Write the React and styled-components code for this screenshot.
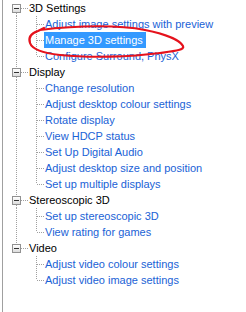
import React from "react";
import styled, { createGlobalStyle } from "styled-components";

const Global = createGlobalStyle`
  html, body { margin: 0; padding: 0; background: #ffffff; }
  body { font-family: "Liberation Sans", Arial, sans-serif; font-size: 11px; }
`;

const Page = styled.div`
  position: relative;
  width: 246px;
  height: 312px;
  padding-left: 2px;
  box-sizing: border-box;
  overflow: hidden;
`;

const Panel = styled.div`
  height: 100%;
  border-left: 1px solid #a0a0a0;
  padding-left: 3px;
  display: flex;
  flex-direction: column;
`;

const Row = styled.div`
  display: flex;
  align-items: stretch;
  height: 16px;
`;

const Spacer = styled.div`
  width: ${(p) => p.$w}px;
  flex: none;
`;

const VCol = styled.div`
  width: 1px;
  flex: none;
  display: flex;
  flex-direction: column;
`;

const VDots = styled.div`
  width: 1px;
  height: ${(p) => (p.$h != null ? `${p.$h}px` : "auto")};
  flex: ${(p) => (p.$h != null ? "none" : "1")};
  background-image: ${(p) =>
    p.$show
      ? "repeating-linear-gradient(to bottom, #a0a0a0 0 1px, transparent 1px 2px)"
      : "none"};
`;

const HDots = styled.div`
  width: ${(p) => p.$w}px;
  flex: none;
  height: 1px;
  align-self: center;
  background-image: repeating-linear-gradient(to right, #a0a0a0 0 1px, transparent 1px 2px);
`;

const BoxCol = styled.div`
  width: 9px;
  flex: none;
  display: flex;
  flex-direction: column;
  align-items: center;
`;

const Expander = styled.div`
  width: 9px;
  height: 9px;
  flex: none;
  box-sizing: border-box;
  border: 1px solid #919191;
  background: linear-gradient(to bottom, #ffffff, #dcdcdc);
  display: flex;
  align-items: center;
  justify-content: center;
  &::after {
    content: "";
    width: 5px;
    height: 1px;
    background: #333333;
  }
`;

const GroupLabel = styled.div`
  padding-left: 1px;
  line-height: 16px;
  color: #000000;
  white-space: nowrap;
`;

const ItemLabel = styled.div`
  padding: 0 3px 0 1px;
  line-height: 16px;
  white-space: nowrap;
  color: ${(p) => (p.$selected ? "#ffffff" : "#1a62d6")};
  background: ${(p) => (p.$selected ? "#3399ff" : "transparent")};
`;

const Scribble = styled.svg`
  position: absolute;
  left: 0;
  top: 0;
  pointer-events: none;
`;

const groups = [
  {
    title: "3D Settings",
    items: [
      "Adjust image settings with preview",
      "Manage 3D settings",
      "Configure Surround, PhysX",
    ],
  },
  {
    title: "Display",
    items: [
      "Change resolution",
      "Adjust desktop colour settings",
      "Rotate display",
      "View HDCP status",
      "Set Up Digital Audio",
      "Adjust desktop size and position",
      "Set up multiple displays",
    ],
  },
  {
    title: "Stereoscopic 3D",
    items: ["Set up stereoscopic 3D", "View rating for games"],
  },
  {
    title: "Video",
    items: ["Adjust video colour settings", "Adjust video image settings"],
  },
];

function GroupRow({ title, first, last }) {
  return (
    <Row>
      <Spacer $w={6} />
      <BoxCol>
        <VDots $h={4} $show={!first} />
        <Expander />
        <VDots $show={!last} />
      </BoxCol>
      <HDots $w={7} />
      <GroupLabel>{title}</GroupLabel>
    </Row>
  );
}

function ItemRow({ label, groupLast, itemLast, selected }) {
  return (
    <Row>
      <Spacer $w={10} />
      <VCol>
        <VDots $show={!groupLast} />
      </VCol>
      <Spacer $w={19} />
      <VCol>
        <VDots $h={8} $show />
        <VDots $show={!itemLast} />
      </VCol>
      <HDots $w={7} />
      <ItemLabel $selected={selected}>{label}</ItemLabel>
    </Row>
  );
}

export default function App() {
  return (
    <>
      <Global />
      <Page>
        <Panel>
          {groups.map((g, gi) => (
            <React.Fragment key={g.title}>
              <GroupRow
                title={g.title}
                first={gi === 0}
                last={gi === groups.length - 1}
              />
              {g.items.map((it, ii) => (
                <ItemRow
                  key={it}
                  label={it}
                  groupLast={gi === groups.length - 1}
                  itemLast={ii === g.items.length - 1}
                  selected={it === "Manage 3D settings"}
                />
              ))}
            </React.Fragment>
          ))}
        </Panel>
        <Scribble width="246" height="312" viewBox="0 0 246 312">
          <path
            d="M 40 30 C 80 25, 120 25, 145 30 C 165 34, 180 40, 183 46 C 185 50, 175 51, 160 53 C 130 57, 90 58, 60 55 C 42 53, 32 49, 30 43 C 28 37, 32 33, 38 31 L 44 28"
            fill="none"
            stroke="#e5121c"
            strokeWidth="2.2"
            strokeLinecap="round"
            strokeLinejoin="round"
          />
        </Scribble>
      </Page>
    </>
  );
}
